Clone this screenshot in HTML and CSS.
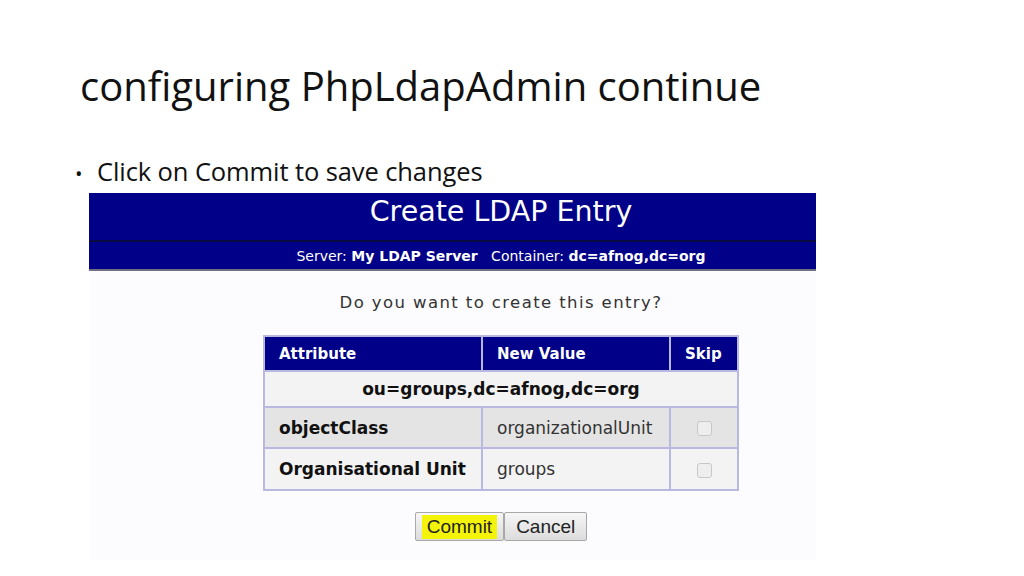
FILE: index.html
```html
<!DOCTYPE html>
<html>
<head>
<meta charset="utf-8">
<link rel="stylesheet" href="styles.css">
</head>
<body>
<div class="slide">
  <h1 class="title">configuring PhpLdapAdmin continue</h1>
  <ul class="bullets">
    <li>Click on Commit to save changes</li>
  </ul>
  <div class="shot">
    <div class="inner">
      <div class="head">Create LDAP Entry</div>
      <div class="sub">Server: <b>My LDAP Server</b>&nbsp;&nbsp; Container: <b>dc=afnog,dc=org</b></div>
      <div class="question">Do you want to create this entry?</div>
      <table class="entry">
        <thead>
          <tr><th class="c1">Attribute</th><th class="c2">New Value</th><th class="c3">Skip</th></tr>
        </thead>
        <tbody>
          <tr class="dn"><td colspan="3">ou=groups,dc=afnog,dc=org</td></tr>
          <tr class="even"><td class="attr">objectClass</td><td class="val">organizationalUnit</td><td class="chk"><span class="box"></span></td></tr>
          <tr class="odd"><td class="attr">Organisational Unit</td><td class="val">groups</td><td class="chk"><span class="box"></span></td></tr>
        </tbody>
      </table>
      <div class="buttons">
        <span class="btn"><span class="hl">Commit</span></span><span class="btn">Cancel</span>
      </div>
    </div>
  </div>
</div>
</body>
</html>
```

FILE: styles.css
```css
html, body {
  margin: 0;
  padding: 0;
  background: #ffffff;
}
.slide {
  width: 1024px;
  height: 576px;
  overflow: hidden;
}
.title {
  margin: 0;
  padding: 61px 0 0 80px;
  font-family: "Open Sans", "Liberation Sans", sans-serif;
  font-weight: 400;
  font-size: 40px;
  line-height: 50px;
  color: #111;
  letter-spacing: 0;
}
.bullets {
  margin: 0;
  padding: 44px 0 0 75px;
  list-style: none;
  font-family: "Open Sans", "Liberation Sans", sans-serif;
  font-size: 25.5px;
  line-height: 32px;
  color: #111;
  letter-spacing: -0.1px;
}
.bullets li::before {
  content: "•";
  display: inline-block;
  width: 22px;
  font-size: 20px;
}
.shot {
  margin: 3px 0 0 89px;
  width: 727px;
  height: 367px;
  overflow: hidden;
  background: #fcfcfe;
}
.inner {
  width: 824px;
  font-family: "DejaVu Sans", Verdana, sans-serif;
  text-align: center;
  color: #222;
}
.head {
  background: #000088;
  color: #fff;
  height: 47px;
  line-height: 38px;
  font-size: 28.5px;
  border-bottom: 2px solid #0a0a40;
}
.sub {
  background: #000088;
  color: #fff;
  font-size: 14px;
  height: 27px;
  line-height: 28px;
  border-bottom: 2px solid #707080;
}
.sub b { font-weight: bold; }
.question {
  font-size: 16.5px;
  letter-spacing: 1.4px;
  color: #333;
  padding-top: 21px;
  height: 43px;
  line-height: 22px;
}
.entry {
  margin: 0 auto;
  border-collapse: collapse;
  border: 2px solid #b8b8e0;
  font-size: 17px;
  text-align: left;
}
.entry th, .entry td {
  border: 2px solid #b8b8e0;
  padding: 0 14px;
}
.entry th {
  background: #000088;
  color: #fff;
  font-weight: bold;
  font-size: 15px;
  height: 33px;
}
.c1 { width: 188px; }
.c2 { width: 158px; }
.c3 { width: 38px; }
.dn td {
  background: #f3f3f3;
  text-align: center;
  font-weight: bold;
  font-size: 17px;
  height: 34px;
  color: #111;
}
.even td { background: #e4e4e4; height: 39px; }
.odd td { background: #f3f3f3; height: 40px; }
.attr { font-weight: bold; color: #111; }
.val { color: #333; }
.chk { text-align: center; padding: 0 !important; }
.box {
  display: inline-block;
  width: 13px;
  height: 13px;
  border: 1px solid #c8c8c8;
  border-radius: 3px;
  background: #eee;
  vertical-align: middle;
}
.buttons {
  padding-top: 21px;
  font-size: 0;
}
.btn {
  display: inline-block;
  font-family: "Liberation Sans", Arial, sans-serif;
  font-size: 19px;
  height: 27px;
  line-height: 27px;
  padding: 0 11px;
  border: 1px solid #a8a8a8;
  border-radius: 2px;
  background: linear-gradient(#f6f6f6, #dcdcdc);
  color: #222;
  vertical-align: top;
}
.hl {
  background: #f4f40a;
  display: inline-block;
  padding: 0 5px;
  margin: 0 -5px;
  line-height: 24px;
}
```
